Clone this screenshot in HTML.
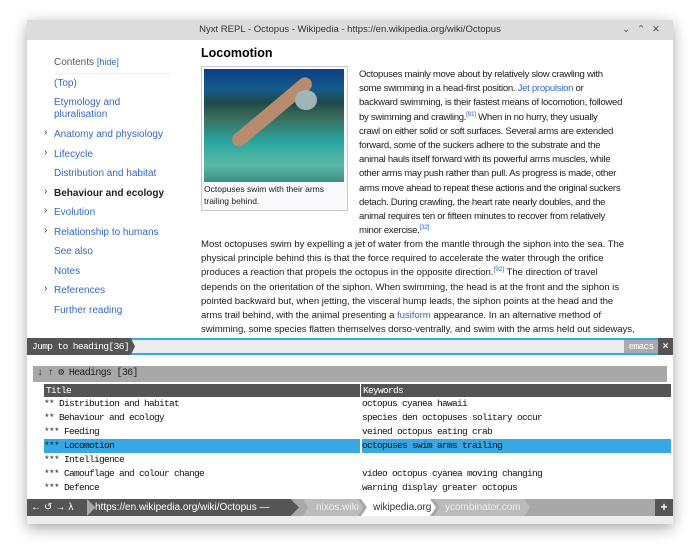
<!DOCTYPE html><html><head><style>
*{margin:0;padding:0;box-sizing:border-box}
body{width:700px;height:557px;background:#fff;position:relative;overflow:hidden;font-family:"Liberation Sans",sans-serif}
.win{position:absolute;left:27px;top:20px;width:646px;height:504px;background:#fff;box-shadow:0 4px 14px rgba(0,0,0,.35)}
.tb{position:absolute;left:0;top:0;width:646px;height:20px;background:#dcdcdc;font-size:9.5px;color:#333;text-align:center;line-height:20px}
.tb .c{position:absolute;right:6px;top:0;letter-spacing:7px;color:#555}
.a{position:absolute;white-space:nowrap}
.toc{font-size:10px;color:#3366cc}
p{font-size:9.6px;line-height:14.2px;color:#202122;white-space:nowrap}
.l{color:#3366cc}
sup{font-size:6.5px;color:#3366cc;line-height:0}
.mono{font-family:"Liberation Mono",monospace;font-size:9.5px;letter-spacing:-0.7px}
.row{position:absolute;left:17px;width:627px;height:14px;line-height:14px;color:#111}
.row span{position:absolute;left:318px}
.ch{position:absolute;left:17px;font-size:10px;color:#333}
</style></head><body>
<div class="win">
<div class="tb">Nyxt REPL - Octopus - Wikipedia - https://en.wikipedia.org/wiki/Octopus<span class="c">⌄⌃✕</span></div>
<div class="a" style="left:27px;top:37px;font-size:10px;color:#54595d">Contents <span class="l" style="font-size:9px">[hide]</span></div>
<div class="a" style="left:27px;top:53px;width:117px;border-top:1px solid #eee"></div>
<div class="toc">
<div class="a" style="left:27px;top:58px">(Top)</div>
<div class="a" style="left:27px;top:77px;line-height:12px">Etymology and<br>pluralisation</div>
<div class="a" style="left:27px;top:109px">Anatomy and physiology</div>
<div class="a" style="left:27px;top:129px">Lifecycle</div>
<div class="a" style="left:27px;top:148px">Distribution and habitat</div>
<div class="a" style="left:27px;top:168px;color:#202122;font-weight:bold">Behaviour and ecology</div>
<div class="a" style="left:27px;top:187px">Evolution</div>
<div class="a" style="left:27px;top:207px">Relationship to humans</div>
<div class="a" style="left:27px;top:226px">See also</div>
<div class="a" style="left:27px;top:246px">Notes</div>
<div class="a" style="left:27px;top:265px">References</div>
<div class="a" style="left:27px;top:285px">Further reading</div>
</div>
<div class="ch" style="top:107px">›</div>
<div class="ch" style="top:127px">›</div>
<div class="ch" style="top:166px">›</div>
<div class="ch" style="top:185px">›</div>
<div class="ch" style="top:205px">›</div>
<div class="ch" style="top:263px">›</div>
<div class="a" style="left:174px;top:26px;font-size:12.5px;font-weight:bold;color:#000">Locomotion</div>
<div class="a" style="left:174px;top:46px;width:147px;height:145px;border:1px solid #c8ccd1;background:#f8f9fa"></div>
<div class="a" style="left:177px;top:49px;width:140px;height:113px;background:linear-gradient(180deg,#0b3f85 0%,#145b8a 18%,#1e4a48 30%,#3a6a5a 42%,#2aa7a0 65%,#5ab9a5 85%,#3e8f82 100%)"></div>
<div class="a" style="left:195px;top:85px;width:100px;height:14px;background:#b88a6e;transform:rotate(-40deg);border-radius:8px"></div>
<div class="a" style="left:268px;top:70px;width:22px;height:20px;background:#9fb4b4;border-radius:50%"></div>
<div class="a" style="left:177px;top:163px;font-size:8.5px;line-height:12px;color:#202122;white-space:normal;width:135px">Octopuses swim with their arms trailing behind.</div>
<div class="a" style="left:332px;top:48px"><p style="letter-spacing:-0.3px">Octopuses mainly move about by relatively slow crawling with<br>some swimming in a head-first position. <span class="l">Jet propulsion</span> or<br>backward swimming, is their fastest means of locomotion, followed<br>by swimming and crawling.<sup>[91]</sup> When in no hurry, they usually<br>crawl on either solid or soft surfaces. Several arms are extended<br>forward, some of the suckers adhere to the substrate and the<br>animal hauls itself forward with its powerful arms muscles, while<br>other arms may push rather than pull. As progress is made, other<br>arms move ahead to repeat these actions and the original suckers<br>detach. During crawling, the heart rate nearly doubles, and the<br>animal requires ten or fifteen minutes to recover from relatively<br>minor exercise.<sup>[32]</sup></p></div>
<div class="a" style="left:174px;top:218px;height:100px;overflow:hidden"><p style="letter-spacing:-0.05px">Most octopuses swim by expelling a jet of water from the mantle through the siphon into the sea. The<br>physical principle behind this is that the force required to accelerate the water through the orifice<br>produces a reaction that propels the octopus in the opposite direction.<sup>[92]</sup> The direction of travel<br>depends on the orientation of the siphon. When swimming, the head is at the front and the siphon is<br>pointed backward but, when jetting, the visceral hump leads, the siphon points at the head and the<br>arms trail behind, with the animal presenting a <span class="l">fusiform</span> appearance. In an alternative method of<br>swimming, some species flatten themselves dorso-ventrally, and swim with the arms held out sideways,</p></div>
<div class="a" style="left:0;top:318px;width:646px;height:17px;background:#ececec;border-top:2px solid #37a8e5;border-bottom:2px solid #37a8e5"></div>
<div class="a mono" style="left:0;top:318px;width:108px;height:17px;background:#555;color:#fff;line-height:17px;padding-left:5px;font-size:9.5px;letter-spacing:-0.6px;clip-path:polygon(0 0,96% 0,100% 50%,96% 100%,0 100%)">Jump to heading[36]</div>
<div class="a mono" style="left:597px;top:320px;width:34px;height:13px;background:#aaa;color:#fff;line-height:13px;text-align:center;font-size:9.5px">emacs</div>
<div class="a" style="left:631px;top:318px;width:15px;height:17px;background:#555;color:#fff;font-size:10px;text-align:center;line-height:17px;font-weight:bold">×</div>
<div class="a mono" style="left:6px;top:346px;width:634px;height:16px;background:#a8a8a8;color:#222;line-height:16px;padding-left:4px;font-size:10px">↓ ↑ ⚙ Headings [36]</div>
<div class="a mono" style="left:17px;top:364px;width:316px;height:13px;background:#555;color:#fff;line-height:13px;padding-left:2px;font-size:9.5px">Title</div>
<div class="a mono" style="left:334px;top:364px;width:310px;height:13px;background:#555;color:#fff;line-height:13px;padding-left:2px;font-size:9.5px">Keywords</div>
<div class="mono">
<div class="row" style="top:377px">** Distribution and habitat<span>octopus cyanea hawaii</span></div>
<div class="row" style="top:391px">** Behaviour and ecology<span>species den octopuses solitary occur</span></div>
<div class="row" style="top:405px">*** Feeding<span>veined octopus eating crab</span></div>
<div class="row" style="top:419px;background:#37a8e5">*** Locomotion<span>octopuses swim arms trailing</span></div>
<div class="a" style="left:333px;top:419px;width:2px;height:14px;background:#fff"></div>
<div class="row" style="top:433px">*** Intelligence</div>
<div class="row" style="top:447px">*** Camouflage and colour change<span>video octopus cyanea moving changing</span></div>
<div class="row" style="top:461px">*** Defence<span>warning display greater octopus</span></div>
</div>
<div class="a" style="left:0;top:479px;width:646px;height:17px;background:#a8a8a8"></div>
<div class="a" style="left:0;top:479px;width:60px;height:17px;background:#555;color:#fff;font-size:10px;line-height:17px;padding-left:4px;letter-spacing:3px">←↺→λ</div>
<div class="a" style="left:60px;top:479px;width:212px;height:17px;background:#555;color:#fff;font-size:10px;line-height:17px;padding-left:8px;clip-path:polygon(0 0,96% 0,100% 50%,96% 100%,0 100%,4% 50%)">https://en.wikipedia.org/wiki/Octopus — </div>
<div class="a" style="left:276px;top:479px;width:60px;height:17px;background:#bbb;color:#eee;font-size:10px;line-height:17px;padding-left:13px;clip-path:polygon(0 0,92% 0,100% 50%,92% 100%,0 100%,8% 50%)">nixos.wiki</div>
<div class="a" style="left:334px;top:479px;width:75px;height:17px;background:#fff;color:#333;font-size:10px;line-height:17px;padding-left:12px;clip-path:polygon(0 0,92% 0,100% 50%,92% 100%,0 100%,8% 50%)">wikipedia.org</div>
<div class="a" style="left:407px;top:479px;width:96px;height:17px;background:#bbb;color:#eee;font-size:10px;line-height:17px;padding-left:11px;clip-path:polygon(0 0,94% 0,100% 50%,94% 100%,0 100%,6% 50%)">ycombinator.com</div>
<div class="a" style="left:628px;top:479px;width:18px;height:17px;background:#555;color:#fff;font-size:12px;line-height:17px;text-align:center;font-weight:bold">+</div>
<div class="a" style="left:0;top:496px;width:646px;height:8px;background:#ededed"></div>
</div>
</body></html>
